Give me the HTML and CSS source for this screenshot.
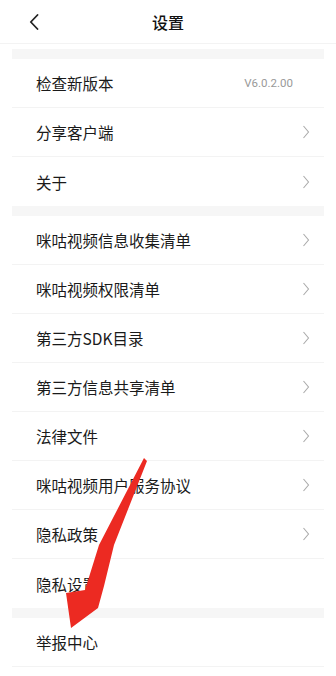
FILE: index.html
```html
<!DOCTYPE html>
<html lang="zh-CN">
<head>
  <meta charset="UTF-8" />
  <meta name="viewport" content="width=device-width, initial-scale=1.0" />
  <title>设置</title>
  <link rel="stylesheet" href="styles.css">
</head>
<body>
  <div class="page">
    <div class="nav-bar">
      <span class="nav-back">
        <svg width="10" height="16" viewBox="0 0 10 16"><path d="M8.5 1 L1.8 8 L8.5 15" fill="none" stroke="#222" stroke-width="1.8" stroke-linecap="round" stroke-linejoin="round"/></svg>
      </span>
      <div class="nav-title">设置</div>
    </div>

    <div class="settings">
      <div class="band"></div>
      <div class="row"><span class="row-label">检查新版本</span><span class="row-value">V6.0.2.00</span></div>
      <div class="row"><span class="row-label">分享客户端</span><svg class="chev" width="8" height="14" viewBox="0 0 8 14"><path d="M1.5 1 L6.5 7 L1.5 13" fill="none" stroke="#ababab" stroke-width="1.1"/></svg></div>
      <div class="row last"><span class="row-label">关于</span><svg class="chev" width="8" height="14" viewBox="0 0 8 14"><path d="M1.5 1 L6.5 7 L1.5 13" fill="none" stroke="#ababab" stroke-width="1.1"/></svg></div>

      <div class="band"></div>
      <div class="row"><span class="row-label">咪咕视频信息收集清单</span><svg class="chev" width="8" height="14" viewBox="0 0 8 14"><path d="M1.5 1 L6.5 7 L1.5 13" fill="none" stroke="#ababab" stroke-width="1.1"/></svg></div>
      <div class="row"><span class="row-label">咪咕视频权限清单</span><svg class="chev" width="8" height="14" viewBox="0 0 8 14"><path d="M1.5 1 L6.5 7 L1.5 13" fill="none" stroke="#ababab" stroke-width="1.1"/></svg></div>
      <div class="row"><span class="row-label">第三方SDK目录</span><svg class="chev" width="8" height="14" viewBox="0 0 8 14"><path d="M1.5 1 L6.5 7 L1.5 13" fill="none" stroke="#ababab" stroke-width="1.1"/></svg></div>
      <div class="row"><span class="row-label">第三方信息共享清单</span><svg class="chev" width="8" height="14" viewBox="0 0 8 14"><path d="M1.5 1 L6.5 7 L1.5 13" fill="none" stroke="#ababab" stroke-width="1.1"/></svg></div>
      <div class="row"><span class="row-label">法律文件</span><svg class="chev" width="8" height="14" viewBox="0 0 8 14"><path d="M1.5 1 L6.5 7 L1.5 13" fill="none" stroke="#ababab" stroke-width="1.1"/></svg></div>
      <div class="row"><span class="row-label">咪咕视频用户服务协议</span><svg class="chev" width="8" height="14" viewBox="0 0 8 14"><path d="M1.5 1 L6.5 7 L1.5 13" fill="none" stroke="#ababab" stroke-width="1.1"/></svg></div>
      <div class="row"><span class="row-label">隐私政策</span><svg class="chev" width="8" height="14" viewBox="0 0 8 14"><path d="M1.5 1 L6.5 7 L1.5 13" fill="none" stroke="#ababab" stroke-width="1.1"/></svg></div>
      <div class="row last"><span class="row-label">隐私设置</span></div>

      <div class="band"></div>
      <div class="row"><span class="row-label">举报中心</span></div>
    </div>

    <!-- red annotation arrow drawn over the list -->
    <svg class="mark-arrow" width="336" height="676" viewBox="0 0 336 676">
      <path d="M144 458 L147 461 L114 545 L104 586 L98 608 L71 628 L66 593 L85 590 L99 545 Z" fill="#ec2a22"/>
    </svg>
  </div>
</body>
</html>
```

FILE: styles.css
```css
body {
  margin: 0;
  background: #fff;
  font-family: "Noto Sans CJK SC", "Noto Sans", sans-serif;
  color: #222;
}
.page {
  position: relative;
  width: 336px;
  height: 676px;
  overflow: hidden;
}
.nav-bar {
  position: relative;
  height: 43px;
  display: flex;
  align-items: center;
  justify-content: center;
  border-bottom: 1px solid #f3f3f3;
}
.nav-back {
  position: absolute;
  left: 29px;
  top: 14px;
  display: flex;
}
.nav-title {
  font-size: 16px;
  font-weight: 500;
  color: #111;
}
.settings {
  margin: 5px 12px 0;
}
.band {
  height: 10px;
  background: #f6f6f6;
}
.row {
  height: 48px;
  display: flex;
  align-items: center;
  justify-content: space-between;
  padding: 0 14px 0 24px;
  border-bottom: 1px solid #f3f3f3;
}
.row.last {
  border-bottom: none;
  height: 49px;
}
.row-label {
  font-size: 15.5px;
  color: #1a1a1a;
}
.row-value {
  font-family: "Roboto", sans-serif;
  font-size: 11.5px;
  color: #999;
  margin-right: 17px;
}
.chev {
  display: block;
}
.mark-arrow {
  position: absolute;
  left: 0;
  top: 0;
  pointer-events: none;
}
```
